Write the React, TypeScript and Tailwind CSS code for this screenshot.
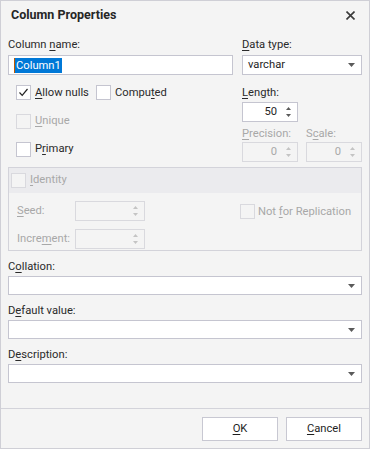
import React from "react";

const font = { fontFamily: 'Roboto, "Noto Sans", sans-serif' };

function U({ children }: { children: React.ReactNode }) {
  return <span className="underline underline-offset-[2px] decoration-[1px]">{children}</span>;
}

function Arrow({ disabled }: { disabled?: boolean }) {
  return (
    <svg width="7" height="4" viewBox="0 0 7 4" className="shrink-0">
      <path d="M0 0 H7 L3.5 4 Z" fill={disabled ? "#b8b8b8" : "#5a5a5a"} />
    </svg>
  );
}

function SpinArrows({ disabled }: { disabled?: boolean }) {
  const c = disabled ? "#c4c4c4" : "#5a5a5a";
  return (
    <svg width="7" height="12" viewBox="0 0 7 12" className="shrink-0">
      <path d="M1 4 L3.5 1 L6 4 Z" fill={c} />
      <path d="M1 8 L3.5 11 L6 8 Z" fill={c} />
    </svg>
  );
}

function Check({ checked, disabled }: { checked?: boolean; disabled?: boolean }) {
  return (
    <div
      className={`w-[15px] h-[15px] shrink-0 border ${
        disabled ? "border-[#d9d9de] bg-[#f4f4f4]" : "border-[#c5c5d0] bg-white"
      } flex items-center justify-center`}
    >
      {checked && (
        <svg width="11" height="11" viewBox="0 0 11 11">
          <path d="M1.5 5.5 L4.2 8.3 L9.5 2" fill="none" stroke="#222" strokeWidth="1.2" />
        </svg>
      )}
    </div>
  );
}

function Spinner({ value, disabled, w }: { value?: string; disabled?: boolean; w: string }) {
  return (
    <div
      className={`${w} h-[20px] border ${
        disabled ? "border-[#d9d9de] bg-[#f4f4f4] text-[#a8a8a8]" : "border-[#c5c5d0] bg-white text-[#1e1e1e]"
      } flex items-center pr-[5px]`}
    >
      <div className="flex-1 text-right pr-[8px] leading-[18px]">{value}</div>
      <SpinArrows disabled={disabled} />
    </div>
  );
}

function Combo({ value, w }: { value?: string; w: string }) {
  return (
    <div className={`${w} h-[19px] border border-[#c5c5d0] bg-white flex items-center pl-[5px] pr-[6px]`}>
      <div className="flex-1 leading-[17px] text-[#1e1e1e]">{value}</div>
      <Arrow />
    </div>
  );
}

export default function App() {
  return (
    <div
      style={font}
      className="w-[370px] h-[449px] border border-[#cfcfd6] bg-[#f4f4f4] flex flex-col text-[11.2px] text-[#2a2a2a] overflow-hidden"
    >
      {/* Title */}
      <div className="h-[29px] shrink-0 flex items-center pl-[10px] pr-[14px]">
        <div className="flex-1 font-bold text-[12.5px] text-[#262626]">Column Properties</div>
        <svg width="9" height="9" viewBox="0 0 9 9">
          <path d="M0.5 0.5 L8.5 8.5 M8.5 0.5 L0.5 8.5" stroke="#3a3a3a" strokeWidth="1.6" />
        </svg>
      </div>

      <div className="flex flex-col pl-[7px] pr-[7px]">
        {/* Row 1 */}
        <div className="flex gap-x-[9px] mt-[7px]">
          <div className="w-[225px] flex flex-col">
            <div className="h-[16px] leading-[16px]">
              Column <U>n</U>ame:
            </div>
            <div className="mt-[2px] h-[20px] border border-[#c5c5d0] bg-white flex items-center pl-[5px]">
              <span className="bg-[#0078d7] text-white leading-[15px] px-[1px] border-l border-[#c05a00]">Column1</span>
            </div>
          </div>
          <div className="w-[120px] flex flex-col">
            <div className="h-[16px] leading-[16px]">
              <U>D</U>ata type:
            </div>
            <div className="mt-[2px] h-[20px] border border-[#c5c5d0] bg-white flex items-center pl-[5px] pr-[6px]">
              <div className="flex-1 text-[#1e1e1e]">varchar</div>
              <Arrow />
            </div>
          </div>
        </div>

        {/* Row 2 */}
        <div className="flex gap-x-[9px] h-[92px]">
          <div className="w-[225px] flex flex-col pl-[8px] pt-[4px]">
            <div className="h-[28px] flex items-center">
              <div className="w-[80px] flex items-center gap-[4px]">
                <Check checked />
                <span>
                  <U>A</U>llow nulls
                </span>
              </div>
              <div className="flex items-center gap-[4px]">
                <Check />
                <span>
                  Compu<U>t</U>ed
                </span>
              </div>
            </div>
            <div className="h-[28px] flex items-center gap-[4px] text-[#a8a8a8]">
              <Check disabled />
              <span>
                <U>U</U>nique
              </span>
            </div>
            <div className="h-[28px] flex items-center gap-[4px]">
              <Check />
              <span>
                P<U>r</U>imary
              </span>
            </div>
          </div>
          <div className="w-[120px] flex flex-col">
            <div className="mt-[10px] h-[16px] leading-[16px]">
              <U>L</U>ength:
            </div>
            <div className="mt-[1px]">
              <Spinner value="50" w="w-[56px]" />
            </div>
            <div className="flex gap-x-[8px] mt-[4px]">
              <div className="w-[56px] flex flex-col">
                <div className="h-[16px] leading-[16px] text-[#a8a8a8]">
                  <U>P</U>recision:
                </div>
                <Spinner value="0" disabled w="w-[56px]" />
              </div>
              <div className="w-[56px] flex flex-col">
                <div className="h-[16px] leading-[16px] text-[#a8a8a8]">
                  S<U>c</U>ale:
                </div>
                <Spinner value="0" disabled w="w-[56px]" />
              </div>
            </div>
          </div>
        </div>

        {/* Identity group */}
        <div className="h-[84px] border border-[#d3d3da] flex flex-col text-[#a8a8a8]">
          <div className="h-[25px] bg-[#ebebee] flex items-center pl-[2px] gap-[4px]">
            <Check disabled />
            <span>
              <U>I</U>dentity
            </span>
          </div>
          <div className="flex flex-col pl-[8px] pt-[8px] gap-[8px]">
            <div className="h-[20px] flex items-center">
              <div className="w-[58px]">
                <U>S</U>eed:
              </div>
              <Spinner disabled w="w-[70px]" />
              <div className="ml-[95px] mt-[2px] flex items-center gap-[3px]">
                <Check disabled />
                <span>
                  Not <U>f</U>or Replication
                </span>
              </div>
            </div>
            <div className="h-[20px] flex items-center">
              <div className="w-[58px]">
                Incre<U>m</U>ent:
              </div>
              <Spinner disabled w="w-[70px]" />
            </div>
          </div>
        </div>

        {/* Collation etc */}
        <div className="mt-[8px] h-[16px] leading-[16px]">
          C<U>o</U>llation:
        </div>
        <div className="mt-[1px]">
          <Combo w="w-full" />
        </div>
        <div className="mt-[8px] h-[16px] leading-[16px]">
          D<U>e</U>fault value:
        </div>
        <div className="mt-[1px]">
          <Combo w="w-full" />
        </div>
        <div className="mt-[8px] h-[16px] leading-[16px]">
          D<U>e</U>scription:
        </div>
        <div className="mt-[1px]">
          <Combo w="w-full" />
        </div>
      </div>

      <div className="flex-1" />

      {/* Footer */}
      <div className="shrink-0 border-t border-[#d3d3da] pt-[8px] pb-[7px] pr-[7px] flex justify-end gap-[8px]">
        <div className="w-[76px] h-[24px] border border-[#c8c8d2] bg-white flex items-center justify-center text-[#1e1e1e]">
          <U>O</U>K
        </div>
        <div className="w-[76px] h-[24px] border border-[#c8c8d2] bg-white flex items-center justify-center text-[#1e1e1e]">
          <U>C</U>ancel
        </div>
      </div>
    </div>
  );
}
